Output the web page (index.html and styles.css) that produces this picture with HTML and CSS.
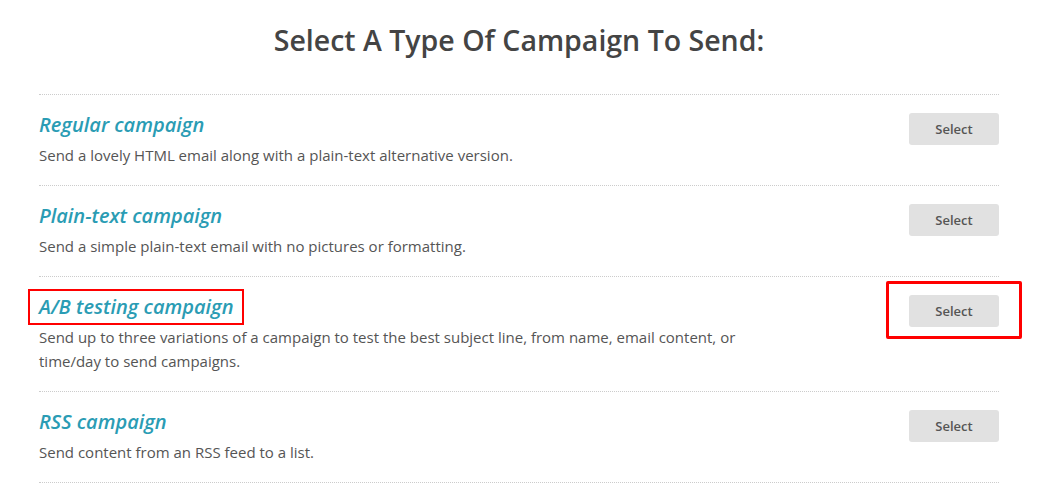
FILE: index.html
```html
<!DOCTYPE html>
<html>
<head>
<meta charset="utf-8">
<link rel="stylesheet" href="styles.css">
</head>
<body>
<div class="page">
  <h1 class="title">Select A Type Of Campaign To Send:</h1>
  <ul class="types">
    <li class="type">
      <div class="info">
        <h2 class="name"><span class="label">Regular campaign</span></h2>
        <p class="desc">Send a lovely HTML email along with a plain-text alternative version.</p>
      </div>
      <button class="select">Select</button>
    </li>
    <li class="type">
      <div class="info">
        <h2 class="name"><span class="label">Plain-text campaign</span></h2>
        <p class="desc">Send a simple plain-text email with no pictures or formatting.</p>
      </div>
      <button class="select">Select</button>
    </li>
    <li class="type">
      <div class="info">
        <h2 class="name"><span class="label marked">A/B testing campaign</span></h2>
        <p class="desc">Send up to three variations of a campaign to test the best subject line, from name, email content, or time/day to send campaigns.</p>
      </div>
      <button class="select marked-btn">Select</button>
    </li>
    <li class="type">
      <div class="info">
        <h2 class="name"><span class="label">RSS campaign</span></h2>
        <p class="desc">Send content from an RSS feed to a list.</p>
      </div>
      <button class="select">Select</button>
    </li>
  </ul>
</div>
</body>
</html>
```
FILE: styles.css
```css
* { box-sizing: border-box; }
html, body { margin: 0; padding: 0; background: #fff; }
body { font-family: "Open Sans", "Liberation Sans", sans-serif; }
.page {
  width: 960px;
  margin-left: 39px;
  padding-top: 21px;
}
.title {
  margin: 0 0 35px;
  text-align: center;
  font-size: 28.5px;
  line-height: 38px;
  font-weight: 600;
  color: #444;
}
.types {
  list-style: none;
  margin: 0;
  padding: 0;
  border-bottom: 1px dotted #ccc;
}
.type {
  display: flex;
  justify-content: space-between;
  align-items: flex-start;
  border-top: 1px dotted #ccc;
  padding: 16px 0 18px;
}
.info { max-width: 720px; }
.name {
  margin: 0 0 4px;
  font-size: 20px;
  line-height: 28px;
  font-weight: 600;
  font-style: italic;
  color: #2a9cb4;
}
.label { position: relative; display: inline-block; }
.label.marked::after {
  content: "";
  position: absolute;
  left: -11px;
  right: -11px;
  top: -4px;
  bottom: -4px;
  border: 2px solid #f00;
}
.desc {
  margin: 0;
  font-size: 15px;
  line-height: 24px;
  color: #555;
}
.select {
  position: relative;
  margin-top: 2px;
  width: 90px;
  height: 32px;
  border: 0;
  border-radius: 3px;
  background: #e1e1e1;
  color: #555;
  font-family: "Open Sans", "Liberation Sans", sans-serif;
  font-size: 13px;
  font-weight: 600;
  padding: 0;
}
.marked-btn::after {
  content: "";
  position: absolute;
  left: -23px;
  right: -23px;
  top: -14px;
  bottom: -12px;
  border: 3px solid #f00;
  border-radius: 2px;
}
```
